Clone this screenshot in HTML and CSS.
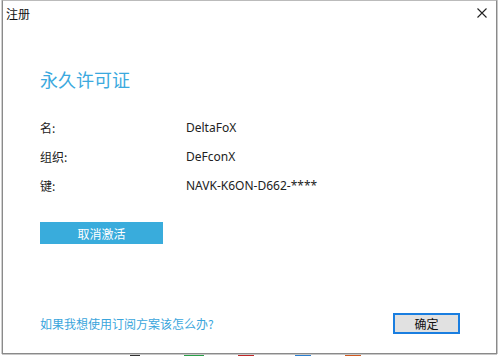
FILE: index.html
```html
<!DOCTYPE html>
<html lang="zh">
<head>
<meta charset="utf-8">
<title>注册</title>
<link rel="stylesheet" href="styles.css">
</head>
<body>
<div class="desk">
  <span class="blob b1"></span><span class="blob b2"></span><span class="blob b3"></span>
  <span class="blob b4"></span><span class="blob b5"></span><span class="blob b6"></span>
  <span class="blob b7"></span><span class="blob b8"></span>
  <div class="window">
    <div class="titlebar">
      <span class="title">注册</span>
      <svg class="close" width="10" height="10" viewBox="0 0 10 10"><path d="M0.5 0.5 L9.5 9.5 M9.5 0.5 L0.5 9.5" stroke="#222" stroke-width="1.1" fill="none"/></svg>
    </div>
    <div class="content">
      <h1 class="heading">永久许可证</h1>
      <div class="rows">
        <div class="row"><span class="label">名:</span><span class="value">DeltaFoX</span></div>
        <div class="row"><span class="label">组织:</span><span class="value">DeFconX</span></div>
        <div class="row"><span class="label">键:</span><span class="value">NAVK-K6ON-D662-****</span></div>
      </div>
      <button class="deact">取消激活</button>
      <div class="footer">
        <a class="link">如果我想使用订阅方案该怎么办?</a>
        <button class="ok">确定</button>
      </div>
    </div>
  </div>
</div>
</body>
</html>
```
FILE: styles.css
```css
html, body {
  margin: 0;
  padding: 0;
  background: #ffffff;
}
body {
  width: 500px;
  height: 356px;
  overflow: hidden;
  font-family: "Noto Sans", "Noto Sans CJK SC", sans-serif;
  font-size: 12px;
  color: #222;
}
.desk {
  position: relative;
  width: 500px;
  height: 356px;
}
.blob {
  position: absolute;
  height: 3px;
}
.b1 { left: 200px; top: 0; width: 20px; background: #4a78b8; }
.b2 { left: 234px; top: 0; width: 20px; background: #4a78b8; }
.b3 { left: 277px; top: 0; width: 22px; background: #d4a030; }
.b4 { left: 130px; top: 354px; width: 10px; background: #333; }
.b5 { left: 184px; top: 354px; width: 20px; background: #2aa048; }
.b6 { left: 238px; top: 354px; width: 16px; background: #c02828; }
.b7 { left: 295px; top: 354px; width: 16px; background: #2b7fd0; }
.b8 { left: 345px; top: 354px; width: 16px; background: #d05a20; }
.window {
  position: absolute;
  left: 2px;
  top: 0;
  width: 493px;
  height: 352px;
  background: #fff;
  border: 1px solid #8a8a8a;
  border-top-color: #bbb;
  box-shadow: -1px 0 0 #d0d0d0, 1px 0 0 #c8c8c8, 0 1px 0 #c8c8c8;
  display: flex;
  flex-direction: column;
}
.titlebar {
  height: 24px;
  display: flex;
  align-items: center;
  justify-content: space-between;
  padding: 0 9px 0 3px;
}
.title {
  font-family: "Noto Sans CJK SC", sans-serif;
  font-size: 12px;
  color: #111;
}
.content {
  flex: 1;
  display: flex;
  flex-direction: column;
  padding: 0 36px 19px 37px;
}
.heading {
  margin: 42px 0 0 0;
  font-family: "Noto Sans CJK SC", sans-serif;
  font-weight: normal;
  font-size: 18px;
  line-height: 24px;
  color: #3ba9de;
}
.rows {
  margin-top: 22px;
  display: flex;
  flex-direction: column;
}
.row {
  height: 29px;
  display: flex;
  align-items: center;
}
.label {
  width: 146px;
  font-family: "Noto Sans CJK SC", sans-serif;
}
.value {
  color: #222;
}
.deact {
  margin-top: 22px;
  width: 123px;
  height: 22px;
  border: none;
  padding: 0;
  background: #39acdc;
  color: #fff;
  font-family: "Noto Sans CJK SC", sans-serif;
  font-size: 12px;
}
.footer {
  margin-top: auto;
  display: flex;
  align-items: center;
  justify-content: space-between;
}
.link {
  font-family: "Noto Sans CJK SC", sans-serif;
  font-size: 12px;
  color: #3aa5dc;
}
.ok {
  width: 67px;
  height: 21px;
  padding: 0;
  background: #e1e1e1;
  border: 2px solid #1a7ee0;
  font-family: "Noto Sans CJK SC", sans-serif;
  font-size: 12px;
  color: #111;
}
```
